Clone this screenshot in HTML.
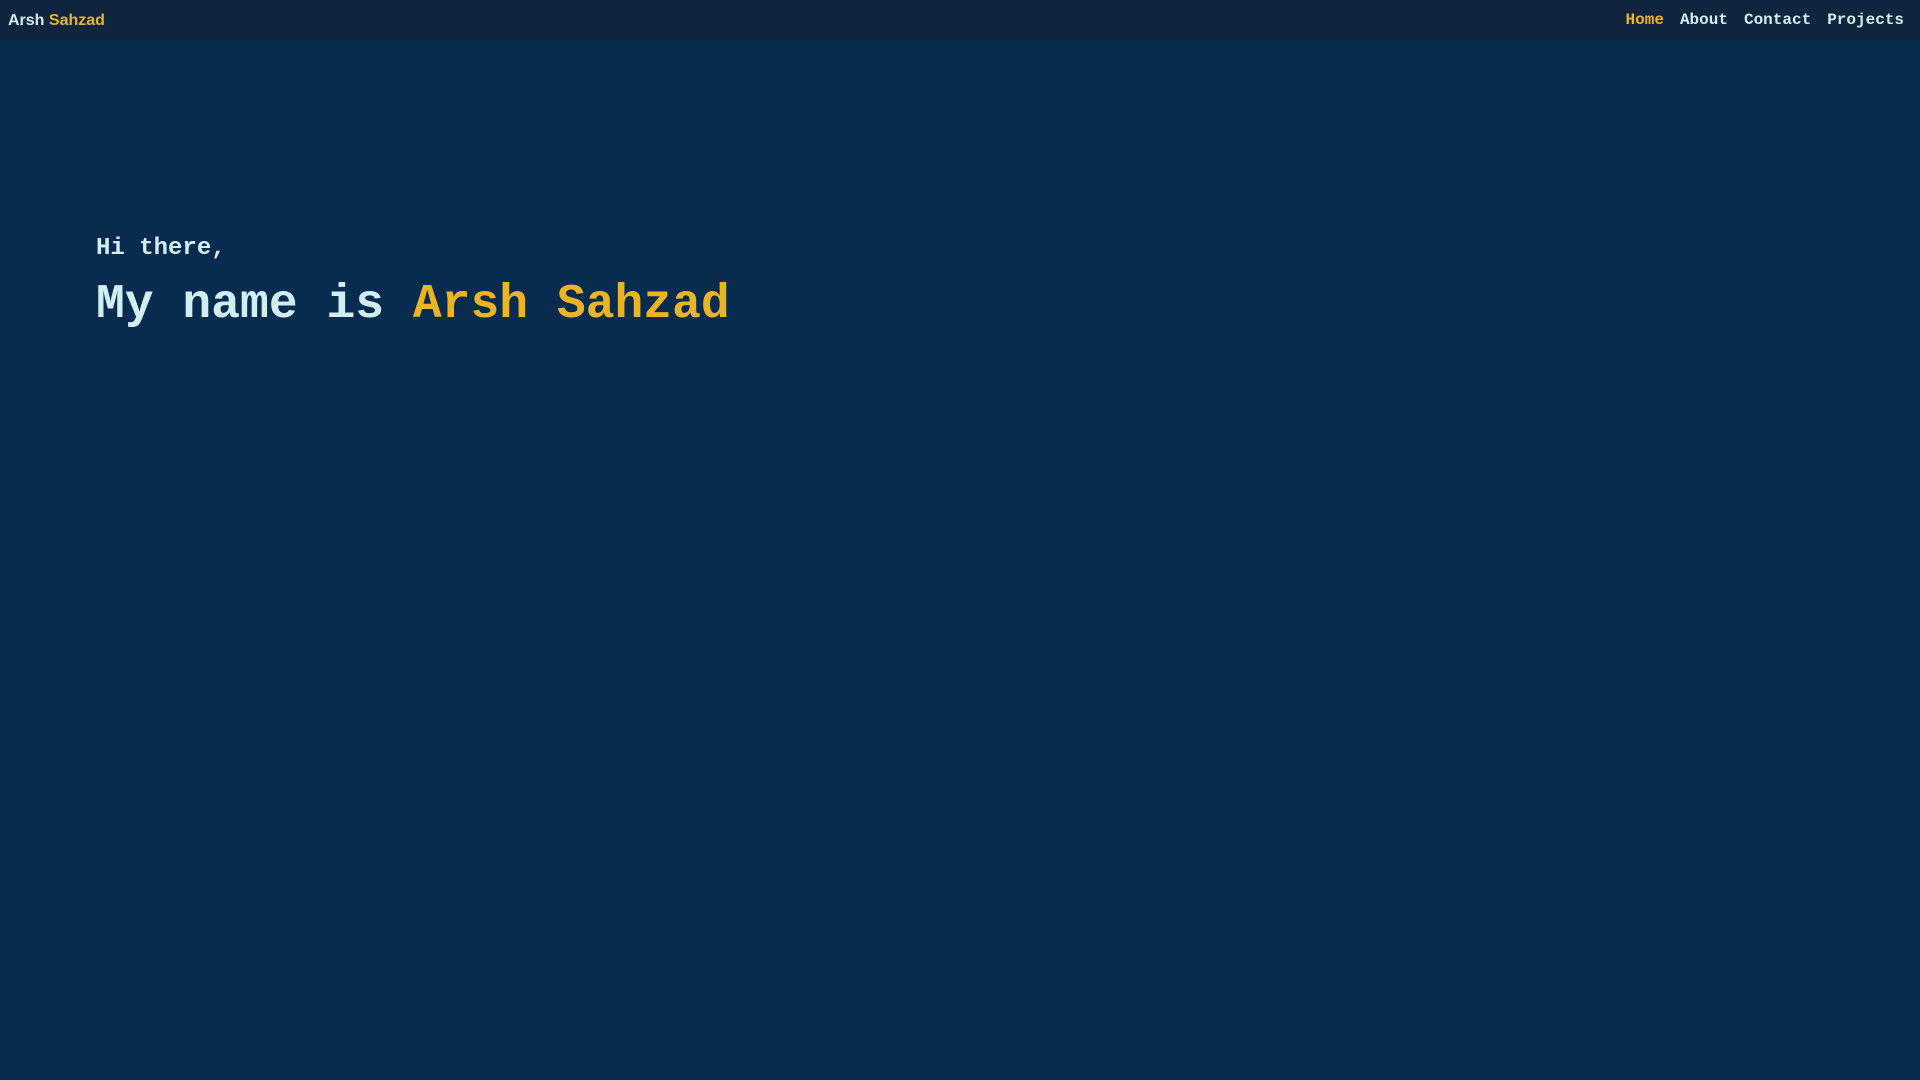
<!DOCTYPE html>
<html><head><meta charset="utf-8"><style>
html,body{margin:0;padding:0;width:1920px;height:1080px;overflow:hidden;background:#072c4f;}
.nav{position:absolute;left:0;top:0;width:1920px;height:40px;background:#10253d;}
.logo{position:absolute;left:8px;top:11px;font:bold 16px/20px "Liberation Sans",sans-serif;color:#d3eef0;}
.y{color:#ebb424;}
.links{position:absolute;right:16px;top:10px;font:bold 16px/20px "Liberation Mono",monospace;color:#d3eef0;}
.links span{margin-left:16px;}
.hi{position:absolute;left:96px;top:234px;font:bold 24px/30px "Liberation Mono",monospace;color:#d3eef0;}
.h{position:absolute;left:96px;top:275px;font:bold 48px/60px "Liberation Mono",monospace;color:#d3eef0;white-space:pre;}
</style></head><body>
<div class="nav"><div class="logo">Arsh <span class="y">Sahzad</span></div>
<div class="links"><span class="y">Home</span><span>About</span><span>Contact</span><span>Projects</span></div></div>
<div class="hi">Hi there,</div>
<div class="h">My name is <span class="y">Arsh Sahzad</span></div>
</body></html>
